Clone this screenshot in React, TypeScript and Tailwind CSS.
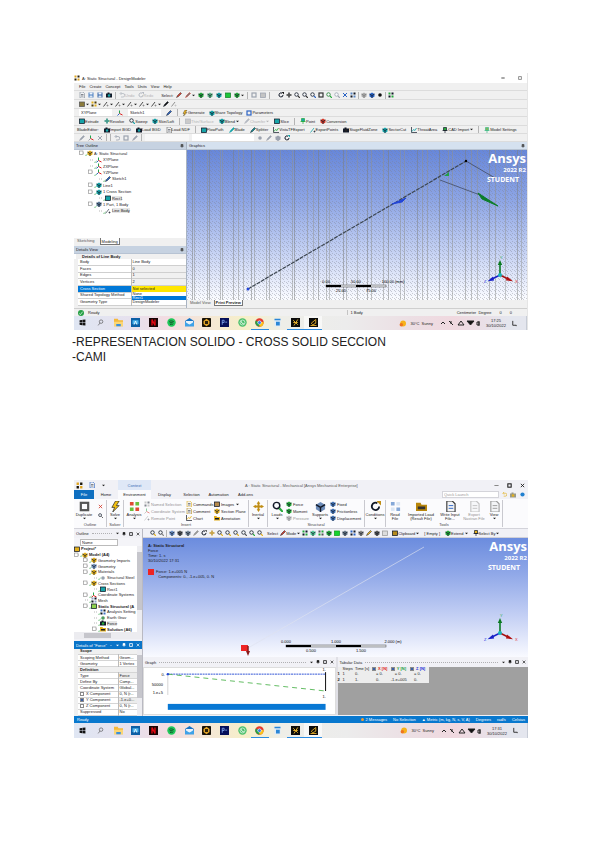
import React from "react";

type Kind =
  | "box" | "cube" | "pen" | "rotate" | "move" | "zoom" | "save" | "folder" | "camera" | "undo" | "min"
  | "dot" | "line" | "bolt" | "frame" | "chart" | "axes" | "pin" | "grid" | "cross" | "check" | "page";

/** Small toolbar drawing on a 12 unit grid. */
function Ico({ k, c = "#334155", d = "#111827", s = "size-[6px]" }: { k: Kind; c?: string; d?: string; s?: string }) {
  const body: Record<Kind, React.ReactNode> = {
    box: <><rect x="1" y="2" width="10" height="9" fill={c} stroke={d} strokeWidth="1.5" /></>,
    cube: <><path d="M1 4 6 1 11 4v5L6 12 1 9z" fill={c} /><path d="M1 4 6 7v5M6 7l5-3" stroke={d} strokeWidth="1.5" fill="none" /></>,
    pen: <path d="M1 11 3 7 9 1l2 2-6 6z" fill={c} stroke={d} />,
    rotate: <><path d="M10 6a4 4 0 1 1-2-3.6" fill="none" stroke={d} strokeWidth="2" /><path d="M7 0h5v5z" fill={c} /></>,
    move: <path d="M6 0 8 3H7v2h2V4l3 2-3 2V7H7v2h1l-2 3-2-3h1V7H3v1L0 6l3-2v1h2V3H4z" fill={c} />,
    zoom: <><circle cx="5" cy="5" r="3.5" fill="#f8fafc" stroke={d} strokeWidth="1.6" /><path d="m8 8 4 4" stroke={c} strokeWidth="2.4" /></>,
    save: <><rect x="1" y="1" width="10" height="10" fill={c} /><rect x="3" y="1" width="6" height="4" fill="#eef4fb" /><rect x="3" y="7" width="6" height="4" fill="#dbe6f2" /></>,
    folder: <><path d="M0 2h5l1 2h6v7H0z" fill={c} /><path d="M2 6h8v3H2z" fill={d} /></>,
    camera: <><rect x="0" y="3" width="12" height="8" fill={d} /><rect x="3" y="1" width="4" height="3" fill={d} /><circle cx="6" cy="7" r="2.5" fill={c} /></>,
    undo: <path d="M3 3h5a3 3 0 0 1 0 7H4M5 0 2 3l3 3" fill="none" stroke={c} strokeWidth="1.6" />,
    min: <path d="M1 6h10" stroke={c} strokeWidth="2.4" />,
    dot: <circle cx="6" cy="6" r="3.6" fill={c} />,
    line: <><path d="M1 11 8 2" stroke={c} strokeWidth="1.6" /><path d="M7 9h4M9 7v4" stroke={d} strokeWidth="1.2" /></>,
    bolt: <path d="M6 0 2 7h3l-2 5 7-7H7l3-5z" fill={c} stroke={d} strokeWidth=".7" />,
    frame: <rect x="2" y="2" width="8" height="8" fill="none" stroke={c} strokeWidth="2.4" />,
    chart: <><path d="M1 0v11h11" fill="none" stroke={d} strokeWidth="1.4" /><path d="m2 9 3-4 3 2 3-5" fill="none" stroke={c} strokeWidth="1.6" /></>,
    axes: <><path d="M5 7V1" stroke="#1fa64a" strokeWidth="2" /><path d="m5 7-4 4" stroke={c} strokeWidth="2" /><path d="m5 7 6 3" stroke="#d22" strokeWidth="2" /></>,
    pin: <><path d="M3 1h6v6H3zM1 7h10" fill={c} stroke={d} strokeWidth="1.4" /><path d="M6 7v5" stroke={d} strokeWidth="1.4" /></>,
    grid: <><path d="M1 1h4v4H1zM7 7h4v4H7z" fill={c} /><path d="M7 1h4v4H7zM1 7h4v4H1z" fill={d} /></>,
    cross: <path d="m2 2 8 8M10 2l-8 8" stroke={c} strokeWidth="2" />,
    check: <path d="m1 7 3 4 7-9" fill="none" stroke={c} strokeWidth="2" />,
    page: <><path d="M2 0h6l3 3v9H2z" fill="#f3f4f6" stroke={c} strokeWidth="1.2" /><path d="M4 5h5M4 8h5" stroke={d} /></>,
  };
  return <svg viewBox="0 0 12 12" className={`${s} shrink-0`} aria-hidden="true">{body[k]}</svg>;
}

type Item = { k?: Kind; c?: string; d?: string; t?: string; dim?: boolean; sep?: boolean; drop?: boolean };

function Tools({ items, gap = "gap-1" }: { items: Item[]; gap?: string }) {
  return (
    <div className={`flex items-center ${gap}`}>
      {items.map((it, i) =>
        it.sep ? (
          <span key={i} className="h-[7px] w-px bg-[#b4b4b4]" />
        ) : (
          <button key={i} className={`flex items-center whitespace-nowrap ${it.dim ? "text-[#9a9a9a] opacity-70" : ""}`}>
            {it.k && <Ico k={it.k} c={it.c} d={it.d} />}
            {it.t}
            {it.drop && <Caret />}
          </button>
        )
      )}
    </div>
  );
}

function Caret() {
  return <svg viewBox="0 0 4 4" className="ml-px size-[3px] shrink-0" aria-hidden="true"><path d="M0 1h4L2 3z" fill="currentColor" /></svg>;
}

function Bar({ h, children }: { h: string; children: React.ReactNode }) {
  return <div className={`flex items-center border-b border-[#dcdcdc] bg-[#f0f0f0] ${h}`}>{children}</div>;
}

function AnsysLogo() {
  return (
    <div className="absolute right-px top-0 flex flex-col items-end font-['Open_Sans',sans-serif] font-bold text-white">
      <span className="text-[13px] leading-[16px]">Ansys</span>
      <span className="mt-px text-[6px] leading-[6px]">2022 R2</span>
      <span className="mr-[7px] mt-[3px] text-[7px] leading-[7px]">STUDENT</span>
    </div>
  );
}

function Triad({ x, y }: { x: number; y: number }) {
  return (
    <g transform={`translate(${x} ${y})`}>
      <path d="M0 0V-11" stroke="#0b7a22" strokeWidth="1.6" />
      <path d="M-2.2-10 0-15l2.2 5z" fill="#0b7a22" />
      <path d="m0 0-9 4.5" stroke="#1820c8" strokeWidth="1.4" />
      <path d="m-7 1.6-5.5 4.6 6.6-.8z" fill="#1820c8" />
      <path d="m0 0 9 4.5" stroke="#a31212" strokeWidth="1.4" />
      <path d="m7 1.6 6 4.6-7-.8z" fill="#b01010" />
      <circle r="2" fill="#19b5b8" />
      <text x="0" y="-16" fontSize="4" fill="#2fae52">Y</text>
      <text x="-16" y="8" fontSize="4" fill="#2038e0">Z</text>
      <text x="15" y="8" fontSize="4" fill="#e03030">X</text>
    </g>
  );
}

function Ruler({ x, y, step, top, bottom }: { x: number; y: number; step: number; top: string[]; bottom: string[] }) {
  return (
    <g transform={`translate(${x} ${y})`} fontSize="4" textAnchor="middle">
      <rect width={step * 4} height="2" fill="#e5e7eb" stroke="#444" strokeWidth=".5" />
      <rect width={step} height="2" />
      <rect x={step * 2} width={step} height="2" />
      {top.map((t, i) => <text key={t} x={i * step * 2 + (i === 2 ? 7 : 0)} y="-2">{t}</text>)}
      {bottom.map((t, i) => <text key={t} x={step + i * step * 2} y="7">{t}</text>)}
    </g>
  );
}

/* ---------- Windows task bar ---------- */

const tiles: React.ReactNode[] = [
  <path d="M1 2.2 5.4 1.5v4.2H1zM6 1.4 11 .8v4.9H6zM1 6.3h4.4v4.2L1 9.8zM6 6.3h5v5l-5-.7z" fill="#111" />,
  <><circle cx="7" cy="4.5" r="3" fill="none" stroke="#444" /><path d="m5 7-3 4" stroke="#444" /></>,
  <><path d="M0 1h5l1 2h6v8H0z" fill="#f5b93b" /><path d="M0 5h12v6H0z" fill="#fbd675" /><path d="M3 8h6v3H3z" fill="#3b8fdc" /></>,
  <><rect width="12" height="12" fill="#0c5fa5" /><path d="M2 3h8v5H2z" fill="#4db4ee" /><path d="m4 9 2-5 2 5" stroke="#fff" fill="none" /></>,
  <><rect width="12" height="12" fill="#160606" /><path d="M4 10V2l4 8V2" stroke="#e50914" strokeWidth="1.8" fill="none" /></>,
  <><circle cx="6" cy="6" r="5.6" fill="#1fc75a" /><path d="M3 4.5c2-1 4.500-.6 6 .5M3.500 6.500c2-.6 3.500-.4 5 .5M4 8.500c1.500-.5 2.500-.3 3.500.3" stroke="#0b3018" fill="none" strokeWidth="1.1" /></>,
  <><path d="M0 4 6 0l6 4v7H0z" fill="#1673c5" /><path d="M1 4h10v5H1z" fill="#e8f3fc" /><path d="m0 5 6 4 6-4v6H0z" fill="#3fa2e8" /></>,
  <><rect width="12" height="12" rx="1" fill="#161208" /><path d="m6 1 4 3v4l-4 3-4-3V4z" fill="#e1a325" /><path d="M4 4h4v4H4z" fill="#2b2008" /></>,
  <><rect width="12" height="12" fill="#06105a" /><path d="M3 9V3h2.500v3H3m4-.5h2.500" stroke="#8fb6ff" fill="none" /></>,
  <><circle cx="6" cy="6" r="5.6" fill="#4bc06c" /><circle cx="6" cy="6" r="3.300" fill="none" stroke="#e6f7ea" /><path d="M4.500 4.500c0 2 1.500 3 3 3" stroke="#fff" fill="none" strokeWidth="1.3" /></>,
  <><circle cx="6" cy="6" r="5.6" fill="#e33b2e" /><path d="M6 6 1.100 3.200A5.600 5.600 0 0 0 6 11.600z" fill="#26a148" /><path d="m6 6 5.500-1A5.600 5.600 0 0 1 6 11.600z" fill="#fbc116" /><circle cx="6" cy="6" r="2.700" fill="#fff" /><circle cx="6" cy="6" r="2" fill="#3778e8" /></>,
  <><path d="M2 1h8v10H2z" fill="#dcebf8" /><path d="M2 1h8v2H2zM4 5h5v5H4z" fill="#2a86d6" /></>,
  <><rect width="12" height="12" fill="#0c0c0c" /><path d="m3 3 6 6M9 2 4 10M3 6h6" stroke="#e4ae2a" strokeWidth="1.3" /></>,
  <><rect width="12" height="12" fill="#0c0c0c" /><path d="M3 7 9 2v5L5 9zM2 10h8" stroke="#e4ae2a" fill="none" strokeWidth="1.2" /></>,
];

function Taskbar({ time, date, h }: { time: string; date: string; h: string }) {
  return (
    <footer className={`flex items-center justify-between bg-linear-[to_right,#dfe6f3_0%,#e6e1ee_12%,#f2dce2_20%,#f4e6d8_28%,#f6efc9_38%,#eeeee8_46%,#ececec_60%,#ecdfe4_74%,#f0d8df_84%,#e4e6ee_96%] ${h}`}>
      <div className="grid h-full w-[248px] grid-cols-14">
        {tiles.map((t, i) => (
          <button key={i} aria-label={`App ${i + 1}`} className={`flex items-center justify-center border-b ${i === 10 || i > 11 ? "border-[#2c8be0]" : "border-transparent"} ${i === 13 ? "bg-white/60" : ""}`}>
            <svg viewBox="0 0 12 12" className={i < 2 ? "size-[7px]" : "size-[9px]"}>{t}</svg>
          </button>
        ))}
      </div>
      <div className="flex h-full items-center gap-[5px] text-[4px]">
        <span className="flex items-center gap-1"><svg viewBox="0 0 12 12" className="size-[7px]"><circle cx="7" cy="6" r="5" fill="#f6b21b" /><circle cx="4" cy="8" r="3" fill="#ee7420" /></svg>30°C&nbsp; Sunny</span>
        <svg viewBox="0 0 42 8" className="ml-px h-[8px] w-[42px]" fill="none" stroke="#222">
          <path d="m2 5 2-2 2 2M10 2l4 4M12 2v3M19 6l3-4 3 4z" /><path d="M28 2h7l-3.500 4z" fill="#111" /><path d="M38 3h2v3h-2zM40 2v5" />
        </svg>
        <span className="text-center leading-[5px]">{time}<br />{date}</span>
        <svg viewBox="0 0 8 8" className="size-[7px]"><path d="M2 1v5h4v1" fill="none" stroke="#222" /></svg>
        <span className="ml-[3px] h-full w-px bg-[#c7ccd6]" />
      </div>
    </footer>
  );
}

/* ---------- DesignModeler window ---------- */

const T = "#16a3a8", G = "#25a93a", B = "#2a63c4", Y = "#e3b01c", R = "#d43a2a", N = "#9ca3af";

const fileTools: Item[] = [{ k: "page", c: "#7b8794" }, { k: "save", c: "#4a7fc1" }, { k: "save", c: "#3564a8" }, { k: "camera", c: T }, { sep: true }, { k: "undo", c: N, t: "Undo", dim: true }, { k: "rotate", c: N, d: N, t: "Redo", dim: true }];
const pickTools: Item[] = [{ t: "Select:" }, { k: "pen", c: R, d: "#333" }, { k: "pen", c: "#777", d: R, drop: true }, { k: "cube", c: G }, { k: "cube", c: "#5cb885" }, { k: "cube", c: T }, { k: "box", c: "#1fc63a", d: "#14842a" }, { k: "cube", c: G, drop: true }, { sep: true }, { k: "frame", c: N }, { k: "box", c: "#c4c4c4", d: N }, { sep: true }];
const viewTools: Item[] = [{ k: "rotate", c: "#111" }, { k: "move", c: "#222" }, { k: "zoom", c: "#333" }, { k: "zoom", c: "#333" }, { k: "zoom", c: B }, { k: "frame", c: "#333" }, { k: "zoom", c: G, d: "#1d7c2c" }, { k: "zoom", c: N, d: N }, { k: "cross", c: B }, { k: "grid", c: "#5a86c4" }, { sep: true }, { k: "cube", c: "#aaa", d: "#777" }, { k: "cube", c: B }, { k: "dot", c: "#111" }, { sep: true }, { k: "grid", c: G }];
const lineTools: Item[] = [{ k: "box", c: "#8b7a3a", d: "#555", drop: true }, { k: "grid", c: Y, d: "#4b3c08", drop: true }, ...Array.from({ length: 5 }, (): Item => ({ k: "line", c: "#222", d: "#777", drop: true })), { k: "pen", c: "#111" }, { k: "line", c: "#777", d: "#bbb" }];
const genTools: Item[] = [{ sep: true }, { k: "bolt", c: "#f2b71d", t: "Generate" }, { k: "cube", c: T, t: "Share Topology" }, { k: "frame", c: B, t: "Parameters" }];
const featTools: Item[] = [{ k: "box", c: T, t: "Extrude" }, { k: "move", c: "#0d7f6c", t: "Revolve" }, { k: "zoom", c: T, t: "Sweep" }, { k: "cube", c: T, t: "Skin/Loft" }, { sep: true }, { k: "box", c: "#bbb", d: N, t: "Thin/Surface", dim: true }, { k: "cube", c: T, t: "Blend", drop: true }, { k: "pen", c: N, d: N, t: "Chamfer", dim: true, drop: true }, { k: "box", c: T, t: "Slice" }, { sep: true }, { k: "pin", c: T, d: G, t: "Point" }, { k: "cube", c: R, t: "Conversion" }];
const bladeTools: Item[] = [{ t: "BladeEditor:" }, { k: "camera", c: T, t: "Import BGD" }, { k: "camera", c: T, t: "Load BGD" }, { k: "page", c: "#666", t: "Load NDF" }, { sep: true }, { k: "box", c: T, t: "FlowPath" }, { k: "pen", c: T, d: T, t: "Blade" }, { k: "pen", c: "#0f8c91", t: "Splitter" }, { k: "chart", c: G, t: "VistaTFExport" }, { k: "line", c: T, t: "ExportPoints" }, { k: "camera", c: "#222", t: "StageFluidZone" }, { k: "cube", c: T, t: "SectorCut" }, { k: "chart", c: T, t: "ThroatArea" }, { k: "pin", c: G, t: "CAD Import", drop: true }, { sep: true }, { k: "pin", c: "#7bb661", d: "#4b8", t: "Model Settings" }];

type Node = { l: number; t: string; k: Kind; c: string; b?: boolean; e?: boolean; hl?: boolean };

const dmTree: Node[] = [
  { l: 1, t: "A: Static Structural", k: "cube", c: Y, e: true },
  { l: 2, t: "XYPlane", k: "axes", c: B }, { l: 2, t: "ZXPlane", k: "axes", c: B }, { l: 2, t: "YZPlane", k: "axes", c: B, e: true },
  { l: 3, t: "Sketch1", k: "pen", c: B },
  { l: 2, t: "Line1", k: "cube", c: T, e: true }, { l: 2, t: "1 Cross Section", k: "cube", c: T, e: true },
  { l: 3, t: "Rect1", k: "box", c: T, hl: true },
  { l: 2, t: "1 Part, 1 Body", k: "cube", c: "#5a7896", e: true },
  { l: 3, t: "Line Body", k: "line", c: "#4b5563", hl: true },
];

const mechTree: Node[] = [
  { l: 0, t: "Project*", k: "box", c: Y, b: true },
  { l: 1, t: "Model (A4)", k: "cube", c: Y, b: true, e: true },
  { l: 2, t: "Geometry Imports", k: "cube", c: Y, e: true }, { l: 2, t: "Geometry", k: "cube", c: "#7a9ac4", e: true }, { l: 2, t: "Materials", k: "cube", c: Y, e: true },
  { l: 3, t: "Structural Steel", k: "dot", c: "#98a2b0" },
  { l: 2, t: "Cross Sections", k: "cube", c: Y, e: true },
  { l: 3, t: "Rect1", k: "box", c: T },
  { l: 2, t: "Coordinate Systems", k: "axes", c: R, e: true }, { l: 2, t: "Mesh", k: "grid", c: "#8da4c8" },
  { l: 2, t: "Static Structural (A", k: "box", c: "#8fd44e", b: true, e: true },
  { l: 3, t: "Analysis Setting", k: "grid", c: "#4476c4" }, { l: 3, t: "Earth Grav", k: "dot", c: "#4f9d62" },
  { l: 3, t: "Force", k: "camera", c: G, hl: true }, { l: 3, t: "Solution (A6)", k: "folder", c: Y, b: true, e: true },
];

const indent = ["pl-0", "pl-0", "pl-[9px]", "pl-[18px]"];

function Tree({ nodes, cls }: { nodes: Node[]; cls: string }) {
  return (
    <ul className={`flex flex-col ${cls}`}>
      {nodes.map((n) => (
        <li key={n.t} className={`flex min-h-0 flex-1 items-center whitespace-nowrap ${indent[n.l]}`}>
          {n.l > 0 && (
            <>
              <svg viewBox="0 0 6 6" className="size-[6px] shrink-0">
                <path d="M2 3h4" stroke="#999" strokeDasharray="1 1" strokeWidth=".7" />
                {n.e && <rect x=".5" y="1" width="3.500" height="3.500" fill="#fff" stroke="#888" strokeWidth=".6" />}
              </svg>
              <Ico k="check" c="#21a336" s="-mr-px size-[3px] self-end" />
            </>
          )}
          <Ico k={n.k} c={n.c} />
          <span className={`ml-px ${n.b ? "font-bold" : ""} ${n.hl ? "bg-[#e6e6e6]" : ""}`}>{n.t}</span>
        </li>
      ))}
    </ul>
  );
}

function PanelHead({ t, cls }: { t: string; cls: string }) {
  return (
    <h2 className={`flex h-[8px] shrink-0 items-center justify-between border-b border-[#b7c3d3] px-[2px] ${cls}`}>
      {t}
      <Ico k="pin" c="#666" d="#333" s="size-[4px]" />
    </h2>
  );
}

const dmRows: [string, string][] = [["Body", "Line Body"], ["Faces", "0"], ["Edges", "1"], ["Vertices", "2"], ["Cross Section", ""], ["Shared Topology Method", ""], ["Geometry Type", "DesignModeler"]];
const stripes = [6, 8, 21, 23, 34, 36, 47, 52, 57, 65, 68, 80, 83, 94, 106, 108, 121, 127, 132, 140, 143, 157, 160, 171, 181, 185, 197, 202, 214, 218, 231, 236, 241, 253, 262, 266, 279, 285, 291, 303, 309, 319, 331, 335];

function DesignModeler() {
  return (
    <section className="border-r border-[#e5e5e5] bg-[#f0f0f0]" aria-label="DesignModeler">
      <header className="flex h-[10px] items-center justify-between bg-white">
        <h1 className="flex items-center gap-[2px]"><Ico k="grid" c="#e0a520" d="#2a210a" />A: Static Structural - DesignModeler</h1>
        <div className="flex gap-[13px] pr-[5px]"><button aria-label="Minimize"><Ico k="min" c="#222" s="size-[4px]" /></button><button aria-label="Restore"><Ico k="frame" c="#777" s="size-[4px]" /></button></div>
      </header>
      <Bar h="h-[8px]"><nav className="flex gap-1 pl-[5px]">{["File", "Create", "Concept", "Tools", "Units", "View", "Help"].map((m) => <button key={m}>{m}</button>)}</nav></Bar>
      <Bar h="h-[9px]"><div className="flex gap-2 pl-[5px]"><Tools items={fileTools} gap="gap-[3px]" /><Tools items={pickTools} gap="gap-[3px]" /><Tools items={viewTools} gap="gap-[2px]" /></div></Bar>
      <Bar h="h-[9px]"><div className="pl-[5px]"><Tools items={lineTools} gap="gap-[2px]" /></div></Bar>
      <Bar h="h-[8px]">
        <div className="flex items-center gap-[5px] pl-[5px]">
          <select aria-label="Plane" className="h-[7px] w-[33px] bg-white px-[2px]"><option>XYPlane</option></select>
          <Ico k="axes" c={B} />
          <select aria-label="Sketch" className="h-[7px] w-[33px] bg-white px-[2px]"><option>Sketch1</option></select>
          <Ico k="pen" c={B} />
          <Tools items={genTools} />
        </div>
      </Bar>
      <Bar h="h-[9px]"><div className="pl-[5px]"><Tools items={featTools} gap="gap-[5px]" /></div></Bar>
      <Bar h="h-[8px]"><div className="pl-[3px]"><Tools items={bladeTools} gap="gap-[5px]" /></div></Bar>
      <Bar h="h-[8px]">
        <div className="flex items-center gap-[3px] pl-[5px]">
          <Tools gap="gap-[3px]" items={[{ k: "pen", c: N, d: N }, { k: "axes", c: N }, { k: "cross", c: N }, { sep: true }, { sep: true }, { k: "undo", c: N }, { k: "frame", c: N }, { k: "pen", c: N, d: N }, { sep: true }]} />
          <input aria-label="Value" className="h-[7px] w-[44px] bg-[#f8f8f8]" />
          <input aria-label="Name" className="h-[7px] w-[62px] bg-white" />
          <Tools gap="gap-[3px]" items={[{ k: "dot", c: N }, { k: "pen", c: N, d: N }, { k: "cube", c: N, d: N }, { k: "rotate", c: T }]} />
        </div>
      </Bar>
      <div className="flex h-[166px]">
        <aside className="flex w-[113px] shrink-0 flex-col border-r border-[#a9b4c2]">
          <PanelHead t="Tree Outline" cls="bg-[#c6d2e1]" />
          <div className="h-[88px] bg-white"><Tree nodes={dmTree} cls="h-[64px] pl-[5px]" /></div>
          <div className="flex h-[8px] items-start gap-1 pl-[2px]"><button className="px-px text-[#555]">Sketching</button><button className="h-[7px] border border-t-0 border-[#777] bg-white px-px">Modeling</button></div>
          <PanelHead t="Details View" cls="bg-[#c6d2e1]" />
          <table className="h-[52px] w-full table-fixed border-collapse bg-white">
            <tbody>
              <tr><th colSpan={2} className="bg-[#f0f0f0] p-0 pl-[6px] text-left leading-[4px]">Details of Line Body</th></tr>
              {dmRows.map(([a, b]) => (
                <tr key={a} className="border-b border-[#cfcfcf]">
                  <td className={`w-[55px] whitespace-nowrap border-l-4 border-[#f0f0f0] p-0 pl-[2px] leading-[4px] ${a === "Cross Section" ? "bg-[#0078d7] text-white" : ""}`}>{a}</td>
                  <td className={`border-l border-[#bbb] p-0 leading-[4px] ${a === "Cross Section" ? "bg-[#ffe600]" : "pl-px"} ${["Faces", "Edges", "Vertices"].includes(a) ? "bg-[#f0f0f0]" : ""}`}>
                    {a === "Cross Section" ? (
                      <div className="relative">
                        <select aria-label="Cross Section" className="block h-[4px] w-full bg-[#ffe600] pl-px leading-[4px]"><option>Not selected</option></select>
                        <ul className="absolute inset-x-0 top-full z-10 mt-px bg-white leading-[4px]"><li className="pl-px">None</li><li className="bg-[#0078d7] pl-px text-white">Rect1</li></ul>
                      </div>
                    ) : b}
                  </td>
                </tr>
              ))}
            </tbody>
          </table>
        </aside>
        <div className="flex min-w-0 flex-1 flex-col">
          <PanelHead t="Graphics" cls="bg-[#d5e1ef]" />
          <div className="relative min-h-0 flex-1 overflow-hidden bg-linear-[to_bottom,#6787da_0%,#8fa7e6_35%,#c8d4f4_70%,#fbfcff_100%]">
            <svg viewBox="0 0 341 150" preserveAspectRatio="xMaxYMid slice" className="size-full">
              <defs>
                <pattern id="mesh" width="4" height="4" patternUnits="userSpaceOnUse"><path d="M0 0h1v1H0zM1 1h1v1H1zM2 3h1v1H2z" fill="#7d8290" opacity=".38" /></pattern>
              </defs>
              <rect width="341" height="150" fill="url(#mesh)" />
              {stripes.map((x, i) => <rect key={x} x={x} width="1" height="150" fill={i % 3 ? "#8f918f" : "#7b7d7c"} opacity=".5" />)}
              <path d="M62 139 280 11" stroke="#3c4650" strokeWidth="1.200" strokeDasharray="4 1" />
              <path d="m280 11 29 17M254 30l40 15" stroke="#39414f" strokeWidth=".7" />
              <circle cx="280" cy="11" r="1.200" />
              <path d="m206 54 14-6-4 4z" fill="#2245d8" stroke="#2245d8" /><path d="m292 43 20 13-16-7z" fill="#0c7d2a" stroke="#0c7d2a" /><path d="m258 26 5-4v4z" fill="#23a048" />
              <circle cx="62" cy="139" r="1.500" fill="#2245d8" />
              <Ruler x={140} y={135} step={15} top={["0.00", "50.00", "100.00 (mm)"]} bottom={["25.00", "75.00"]} />
              <Triad x={314} y={125} />
            </svg>
            <AnsysLogo />
          </div>
          <div className="flex h-[8px] shrink-0 items-start gap-[3px] pl-[3px]"><button className="text-[#555]">Model View</button><button className="h-[6px] border border-t-0 border-[#777] bg-white px-px font-bold">Print Preview</button></div>
        </div>
      </div>
      <div className="flex h-[8px] items-center border-t border-[#cfcfcf] pl-1">
        <span className="flex w-3/5 items-center gap-1"><span className="flex size-[6px] items-center justify-center rounded-full bg-[#25a045]"><Ico k="check" c="#fff" s="size-[4px]" /></span>Ready</span>
        <span className="border-l border-[#c4c4c4] pl-[2px]">1 Body</span>
        <span className="ml-auto flex gap-2 pr-[15px]"><span>Centimeter&nbsp; Degree</span><span>0</span><span>0</span></span>
      </div>
      <Taskbar time="17:25" date="30/10/2022" h="h-[14px]" />
    </section>
  );
}

/* ---------- Mechanical window ---------- */

function Big({ k, c, d, a, b, w, dim }: { k: Kind; c: string; d?: string; a: string; b?: string; w: string; dim?: boolean }) {
  return (
    <button className={`flex flex-col items-center pt-px leading-[4px] ${w} ${dim ? "opacity-50" : ""}`}>
      <Ico k={k} c={c} d={d} s="size-[11px]" />
      <span className="mt-px whitespace-nowrap">{a}</span>
      {b ? <span className="whitespace-nowrap">{b}</span> : <Caret />}
    </button>
  );
}

function Stack({ items, w }: { items: Item[]; w: string }) {
  return (
    <div className={`flex flex-col justify-between py-px ${w}`}>
      {items.map((i) => <button key={i.t} className={`flex items-center gap-px whitespace-nowrap ${i.dim ? "opacity-50" : ""}`}><Ico k={i.k!} c={i.c} d={i.d} />{i.t}{i.drop && <Caret />}</button>)}
    </div>
  );
}

function Group({ label, children }: { label: string; children: React.ReactNode }) {
  return (
    <div className="flex flex-col border-r border-[#c9c9cf]">
      <div className="flex h-[23px]">{children}</div>
      <span className="text-center leading-[5px] text-[#444]">{label}</span>
    </div>
  );
}

const mechView: Item[] = [{ k: "zoom", c: Y }, { k: "zoom", c: "#888" }, { sep: true }, { k: "cube", c: "#6c8fc4" }, { k: "cube", c: "#555" }, { k: "cube", c: "#7a8b9c" }, { k: "pen", c: "#999", d: "#888" }, { k: "rotate", c: "#666" }, { k: "move", c: "#b98b16" }, { k: "zoom", c: Y }, { k: "zoom", c: Y }, { k: "zoom", c: Y }, { k: "zoom", c: "#555" }, { k: "zoom", c: G }, { k: "zoom", c: Y }];
const mechPick: Item[] = [{ t: "Select" }, { k: "pen", c: R, t: "Mode", drop: true }, { k: "grid", c: G }, { k: "cube", c: "#5c9" }, { k: "grid", c: "#555", d: G }, { k: "cube", c: G }, { k: "box", c: "#17d42d", d: "#10a020" }, { k: "cube", c: "#678" }, { k: "grid", c: B }, { k: "cube", c: "#888" }, { k: "pen", c: Y }, { k: "cube", c: "#555" }, { k: "box", c: "#ddd", d: "#999" }];

const mechRows: [string, string][] = [["-Scope", ""], ["Scoping Method", "Geom..."], ["Geometry", "1 Vertex"], ["-Definition", ""], ["Type", "Force"], ["Define By", "Comp..."], ["Coordinate System", "Global..."], ["X Component", "0, N (r..."], ["Y Component", "-1.e+0..."], ["Z Component", "0, N (r..."], ["Suppressed", "No"]];

function Tick({ label, on = true }: { label: string; on?: boolean }) {
  return (
    <label className="flex items-center gap-[2px]">
      <input type="checkbox" defaultChecked={on} className="size-[4px] shrink-0 appearance-none border border-[#8a8a8a] bg-white checked:bg-[#3a5fa8]" />
      {label}
    </label>
  );
}

function WinDots({ t, cls }: { t: string; cls: string }) {
  return (
    <h2 className={`flex shrink-0 items-center gap-[3px] px-[2px] ${cls}`}>
      {t}<span className="min-w-0 flex-1 border-t border-dotted border-current opacity-30" />
      <Caret /><Ico k="pin" c="currentColor" d="currentColor" s="size-[4px]" /><Ico k="frame" c="currentColor" s="size-[4px]" /><Ico k="cross" c="currentColor" s="size-[4px]" />
    </h2>
  );
}

function Mechanical() {
  return (
    <section className="bg-[#f1f1f6]" aria-label="Mechanical">
      <header className="flex h-[10px] items-center">
        <div className="flex w-[44px] items-center gap-[6px] pl-[2px]"><Ico k="grid" c="#e0a520" d="#1a1508" s="size-[7px]" /><Ico k="page" c={B} /><Caret /></div>
        <span className="flex h-full w-[33px] items-center justify-center bg-[#dfe8f7] text-[#3a6db5]">Context</span>
        <h1 className="flex-1 pl-[94px] text-[#555]">A : Static Structural - Mechanical [Ansys Mechanical Enterprise]</h1>
        <div className="flex shrink-0 gap-2 pr-[3px]">{(["min", "frame", "cross"] as Kind[]).map((k) => <button key={k} aria-label={k}><Ico k={k} c={k === "min" ? "#888" : "#111"} s="size-[5px]" /></button>)}</div>
      </header>
      <nav className="flex h-[9px] items-center">
        <button className="h-full w-[20px] bg-[#0f6fc0] text-white">File</button>
        <button className="w-[24px]">Home</button>
        <button className="h-full w-[33px] bg-[#fbfbfd]">Environment</button>
        {["Display", "Selection", "Automation", "Add-ons"].map((t) => <button key={t} className="w-[27px]">{t}</button>)}
        <div className="ml-auto flex items-center gap-[3px] pr-[2px]">
          <input aria-label="Quick Launch" placeholder="Quick Launch" className="h-[7px] w-[57px] border border-[#d4d4da] bg-white px-px placeholder:text-[#999]" />
          <Ico k="undo" c={Y} s="size-[5px]" /><Ico k="camera" c={Y} d="#998" /><Ico k="dot" c="#2080d0" s="size-[7px]" />
        </div>
      </nav>
      <div className="flex h-[30px] border-b border-[#d3d3da] bg-[#fbfbfd] py-px">
        <Group label="Outline">
          <Big k="frame" c="#555" a="Duplicate" w="w-[20px]" />
          <div className="flex w-[12px] flex-col items-center justify-around py-[2px]"><Ico k="cross" c={R} s="size-[5px]" /><Ico k="zoom" c="#666" s="size-[5px]" /></div>
        </Group>
        <Group label="Solver"><Big k="bolt" c="#f3c111" a="Solve" w="w-[16px]" /></Group>
        <Group label="Insert">
          <Big k="grid" c="#e04a34" d="#6bbf3a" a="Analysis" w="w-[20px]" />
          <Stack w="w-[42px]" items={[{ k: "grid", c: "#999", t: "Named Selection", dim: true }, { k: "axes", c: "#999", t: "Coordinate System", dim: true }, { k: "line", c: "#999", t: "Remote Point", dim: true }]} />
          <Stack w="w-[28px]" items={[{ k: "page", c: Y, t: "Commands" }, { k: "page", c: "#b58a1c", t: "Comment" }, { k: "chart", c: Y, t: "Chart" }]} />
          <Stack w="w-[34px]" items={[{ k: "box", c: "#b58a4c", t: "Images", drop: true }, { k: "cube", c: Y, t: "Section Plane" }, { k: "folder", c: Y, t: "Annotation" }]} />
        </Group>
        <Group label=""><Big k="move" c="#c08e16" a="Inertial" w="w-[18px]" /></Group>
        <Group label="Structural">
          <Big k="zoom" c={G} a="Loads" w="w-[18px]" />
          <Stack w="w-[24px]" items={[{ k: "cube", c: G, t: "Force" }, { k: "cube", c: G, t: "Moment" }, { k: "cube", c: "#888", t: "Pressure", dim: true }]} />
          <Big k="cube" c="#6c8bb8" a="Supports" w="w-[20px]" />
          <Stack w="w-[34px]" items={[{ k: "cube", c: "#4475b8", t: "Fixed" }, { k: "cube", c: "#4475b8", t: "Frictionless" }, { k: "cube", c: "#4475b8", t: "Displacement" }]} />
        </Group>
        <Group label=""><Big k="rotate" c="#c08e16" a="Conditions" w="w-[20px]" /></Group>
        <Group label="Tools">
          <Big k="grid" c="#85a8d8" d="#dbe6f4" a="Read" b="File" w="w-[18px]" />
          <Big k="folder" c="#b8860b" d="#333" a="Imported Load" b="(Result File)" w="w-[34px]" />
          <Big k="page" c="#333" d={B} a="Write Input" b="File..." w="w-[24px]" />
          <Big k="page" c="#888" d="#888" a="Export" b="Nastran File" w="w-[24px]" dim />
          <Big k="page" c="#999" d="#999" a="View" w="w-[16px]" />
        </Group>
      </div>
      <div className="flex">
        <aside className="flex w-[69px] shrink-0 flex-col border-r border-[#b9b9c2]">
          <WinDots t="Outline" cls="h-[9px]" />
          <div className="flex h-[8px] items-center bg-[#f4f4f8] pl-[6px]"><select aria-label="Filter" className="h-[7px] w-[38px] border border-[#bbb] bg-white px-px leading-[5px]"><option>Name</option></select></div>
          <div className="flex bg-white">
            <div className="w-[63px] shrink-0"><Tree nodes={mechTree} cls="h-[86px]" /></div>
            <div className="w-[5px] bg-[#ececf0] py-[6px]"><div className="h-[58px] bg-[#c6c6cc]" /></div>
          </div>
          <div className="flex h-[7px] bg-[#ececf0] py-px pl-[10px]"><div className="w-[27px] bg-[#c6c6cc]" /></div>
          <WinDots t="Details of &quot;Force&quot;" cls="mt-[2px] h-[8px] bg-[#0a74c8] text-white" />
          <div className="flex h-[67px]">
            <table className="h-[67px] w-[63px] table-fixed border-collapse bg-white">
              <tbody>
                {mechRows.map(([a, b]) => {
                  const head = a.startsWith("-");
                  const comp = a.endsWith("Component");
                  return (
                    <tr key={a} className={`border-b border-[#d5d5d5] ${head ? "bg-[#f0f0f0] font-bold" : ""}`}>
                      <td className="w-[42px] whitespace-nowrap border-l-4 border-[#f0f0f0] p-0 pl-[2px] leading-[4px]">
                        {comp ? <Tick label={a} on={a[0] === "Y"} /> : a.replace("-", "")}
                      </td>
                      <td className={`whitespace-nowrap p-0 pl-px leading-[4px] ${head ? "" : "border-l border-[#bbb]"} ${a === "Type" || a[0] === "Y" ? "bg-[#ececec]" : ""}`}>{b}</td>
                    </tr>
                  );
                })}
              </tbody>
            </table>
            <div className="w-[5px] bg-[#ececf0] py-[6px]"><div className="h-[43px] bg-[#c6c6cc]" /></div>
          </div>
        </aside>
        <div className="flex min-w-0 flex-1 flex-col">
          <div className="flex h-[9px] items-center gap-1 overflow-hidden border-b border-[#d0d0d8] pl-[7px]">
            <Tools items={mechView} gap="gap-[2px]" /><Tools items={mechPick} gap="gap-[2px]" />
            <Tools items={[{ k: "box", c: "#b58a1c", t: "Clipboard", drop: true }, { t: "[ Empty ]" }, { k: "cube", c: G, t: "Extend", drop: true }, { k: "pin", c: Y, t: "Select By", drop: true }]} gap="gap-[5px]" />
          </div>
          <div className="relative h-[119px] overflow-hidden bg-linear-[to_bottom,#6b8cde_0%,#90a8e8_30%,#c3cff4_65%,#f9faff_100%]">
            <svg viewBox="0 0 385 119" preserveAspectRatio="xMaxYMid slice" className="size-full">
              <path d="M105 110 281 9" stroke="#dfe3f0" strokeWidth=".8" opacity=".8" />
              <rect x="98" y="107" width="7" height="6" fill="#ee2424" /><path d="M105 108v7" stroke="#8a1a1a" strokeWidth="1.500" /><path d="m103 113 2 5 2-5z" fill="#8a1a1a" />
              <Ruler x={143} y={107} step={25} top={["0.000", "1.000", "2.000 (m)"]} bottom={["0.500", "1.500"]} />
              <Triad x={357} y={95} />
            </svg>
            <div className="absolute left-[5px] top-[5px] leading-[5px]">
              <p className="font-bold">A: Static Structural</p><p>Force</p><p>Time: 1. s</p><p>30/10/2022 17:31</p>
              <p className="mt-[6px] flex gap-[2px]"><span className="size-[6px] bg-[#ee2424]" /><span>Force: 1.e+005 N<br />&nbsp; Components: 0., -1.e+005, 0. N</span></p>
            </div>
            <AnsysLogo />
          </div>
          <div className="grid h-[58px] grid-cols-2">
            <section className="flex flex-col">
              <WinDots t="Graph" cls="h-[10px]" />
              <div className="flex-1 border border-[#ddd] bg-white">
                <svg viewBox="0 0 192 46" className="size-full" fontSize="4">
                  <text x="21" y="8" textAnchor="end">0.</text><text x="19" y="18" textAnchor="end">50000</text><text x="19" y="26" textAnchor="end">1.e+5</text>
                  <path d="M24 6h159" stroke="#3155d6" strokeDasharray="2 .7" /><path d="m24 6 159 17" stroke="#52b552" strokeWidth=".9" strokeDasharray="5 4" />
                  <path d="M24 6v21" stroke="#aaa" strokeWidth=".5" /><path d="M183 4v19" stroke="#111" /><circle cx="24" cy="6" r="1.200" fill="#2245d8" />
                  <text x="180" y="3">1.</text><text x="180" y="30">1.</text><rect x="24" y="36" width="159" height="6" fill="#0878d4" />
                </svg>
              </div>
            </section>
            <section className="flex min-w-0 flex-col border-l-2 border-[#e0e0e6]">
              <WinDots t="Tabular Data" cls="h-[10px]" />
              <div className="flex-1 bg-[#a0a0a0]">
                <table className="h-[16px] w-[91px] border-collapse bg-[#ededed] text-left">
                  <thead><tr className="leading-[4px]">
                    <th className="w-[5px]" /><th className="p-0 font-normal">Steps</th><th className="p-0 font-normal">Time [s]</th>
                    {([["X [N]", "text-[#e02020]"], ["Y [N]", "text-[#1a9d3c]"], ["Z [N]", "text-[#1a30d8]"]]).map(([l, c]) => <th key={l} className={`p-0 font-bold ${c}`}><Tick label={l} /></th>)}
                  </tr></thead>
                  <tbody className="leading-[4px]">
                    <tr><th className="p-0">1</th><td className="p-0">1</td><td className="p-0">0.</td><td className="p-0 pl-1">= 0.</td><td className="p-0 pl-1">= 0.</td><td className="p-0 pl-1">= 0.</td></tr>
                    <tr><th className="p-0">2</th><td className="p-0">1</td><td className="p-0">1.</td><td className="p-0 pl-1">0.</td><td className="p-0">-1.e+005</td><td className="p-0 pl-1">0.</td></tr>
                  </tbody>
                </table>
              </div>
            </section>
          </div>
        </div>
      </div>
      <div className="flex h-[7px] items-center justify-between bg-[#0878ce] px-[3px] text-white">
        <span>Ready</span>
        <span className="flex gap-1.5 whitespace-nowrap"><span className="flex items-center gap-px"><Ico k="dot" c="#f59b2e" s="size-[5px]" />2 Messages</span><span>No Selection</span><span>▲ Metric (m, kg, N, s, V, A)</span><span>Degrees</span><span>rad/s</span><span>Celsius</span></span>
      </div>
      <Taskbar time="17:31" date="30/10/2022" h="h-[15px]" />
    </section>
  );
}

export default function App() {
  return (
    <main className="min-h-screen bg-white pb-[110px] pl-[74px] pr-[72px] pt-[73px] font-['Liberation_Sans',Arial,sans-serif] text-[4px] leading-[5px] text-[#1c1c1c] [&_select]:appearance-none">
      <DesignModeler />
      <p className="-ml-[2px] h-[150px] pt-[5px] text-[12px] leading-[15px] text-[#222]">
        -REPRESENTACION SOLIDO - CROSS SOLID SECCION
        <br />
        -CAMI
      </p>
      <Mechanical />
    </main>
  );
}
